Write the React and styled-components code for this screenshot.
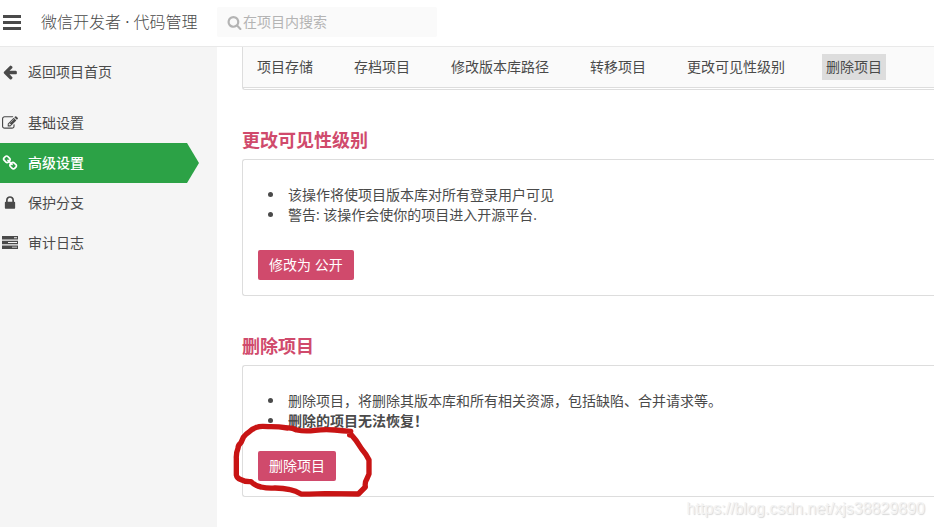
import React, { useState } from "react";
import styled, { createGlobalStyle } from "styled-components";

const GlobalStyle = createGlobalStyle`
  * {
    box-sizing: border-box;
  }
  body {
    margin: 0;
    background-color: #ffffff;
    color: #4a4a4a;
    font-family: "Open Sans", "Noto Sans CJK SC", sans-serif;
    font-size: 14px;
    line-height: 20px;
  }
`;

const Page = styled.div`
  position: relative;
  display: flex;
  flex-direction: column;
  min-height: 100vh;
  overflow: hidden;
`;
const Header = styled.header`
  display: flex;
  align-items: center;
  height: 47px;
  padding-bottom: 2px;
  border-bottom: 1px solid #e9e9e9;
`;
const Brand = styled.div`
  display: flex;
  align-items: center;
  flex: 0 0 217px;
`;
const MenuButton = styled.button`
  display: flex;
  margin-right: 20px;
  padding: 0 0 0 3px;
  border: none;
  background-color: transparent;
  color: #4a4a4a;
`;
const BrandName = styled.h1`
  margin: 0;
  font-size: 16px;
  font-weight: 300;
  white-space: nowrap;
`;
const SearchBox = styled.label`
  display: flex;
  align-items: center;
  gap: 1px;
  width: 220px;
  height: 30px;
  padding-left: 10px;
  border-radius: 2px;
  background-color: #fafafa;
  color: #b4b4b4;
`;
const SearchInput = styled.input`
  flex: 1;
  min-width: 0;
  padding: 0;
  border: none;
  outline: none;
  background-color: transparent;
  color: #4a4a4a;
  font: inherit;
  &::placeholder {
    color: #b4b4b4;
    opacity: 1;
  }
`;
const Body = styled.div`
  display: flex;
  flex: 1;
`;
const Sidebar = styled.nav`
  flex: 0 0 217px;
  padding-top: 5px;
  background-color: #f5f5f5;
`;
const SideList = styled.ul`
  margin: 11px 0 0;
  padding: 0;
  list-style: none;
`;
const SideLink = styled.a`
  display: flex;
  align-items: center;
  gap: 10px;
  width: 199px;
  height: 40px;
  padding-left: 2px;
  background-color: ${(props) => (props.$active ? "#2ca246" : "transparent")};
  clip-path: polygon(0 0, 187px 0, 100% 50%, 187px 100%, 0 100%);
  color: ${(props) => (props.$active ? "#ffffff" : "#4a4a4a")};
  font-weight: ${(props) => (props.$active ? 500 : 400)};
  text-decoration: none;
`;
const Main = styled.main`
  flex: 1;
  min-width: 0;
  padding-left: 25px;
`;
const TabsFrame = styled.div`
  padding-bottom: 1px;
  border: solid #dddddd;
  border-width: 0 0 1px 1px;
  border-radius: 0 0 0 3px;
`;
const Tabs = styled.nav`
  display: flex;
  gap: 33px;
  padding: 7px 0 7px 10px;
  border-bottom: 1px solid #dddddd;
  background-color: #fafafa;
`;
const Tab = styled.a`
  padding: 3px 4px;
  background-color: ${(props) => (props.$active ? "#dddddd" : "transparent")};
  color: #4a4a4a;
  text-decoration: none;
  white-space: nowrap;
`;
const Section = styled.section`
  margin-top: 40px;
`;
const SectionTitle = styled.h2`
  margin: 0 0 9px;
  color: #d04a6c;
  font-size: 18px;
  font-weight: 700;
  line-height: 20px;
`;
const Panel = styled.div`
  padding: 25px 15px 15px;
  border: solid #dddddd;
  border-width: 1px 0 1px 1px;
  border-radius: 3px 0 0 3px;
`;
const Notes = styled.ul`
  margin: 0 0 ${(props) => props.$space}px;
  padding-left: 27px;
`;
const Note = styled.li`
  padding-left: 3px;
`;
const ButtonWrap = styled.div`
  position: relative;
  display: flex;
`;
const DangerButton = styled.button`
  height: 30px;
  padding: 0 11px;
  border: none;
  border-radius: 2px;
  background-color: #d04a6c;
  color: #ffffff;
  font: inherit;
`;
const HandCircle = styled.svg`
  position: absolute;
  top: -29px;
  left: -33px;
  width: 150px;
  height: 75px;
  pointer-events: none;
`;
const Watermark = styled.div`
  position: absolute;
  right: 9px;
  bottom: 8px;
  color: #f3f3f3;
  font-family: "Liberation Sans", sans-serif;
  font-size: 16px;
  text-shadow: 1px 1px 1px #d8d8d8;
`;

const icons = {
  search:
    "M1216 832q0-185-131.5-316.5t-316.5-131.5-316.5 131.5-131.5 316.5 131.5 316.5 316.5 131.5 316.5-131.5 131.5-316.5zm512 832q0 52-38 90t-90 38q-54 0-90-38l-343-342q-179 124-399 124-143 0-273.5-55.5t-225-150-150-225-55.5-273.5 55.5-273.5 150-225 225-150 273.5-55.5 273.5 55.5 225 150 150 225 55.5 273.5q0 220-124 399l343 343q37 37 37 90z",
  back: "M1664 896v128q0 53-32.5 90.5t-84.5 37.5h-704l293 294q38 36 38 90t-38 90l-75 76q-37 37-90 37-52 0-91-37l-651-652q-37-37-37-90 0-52 37-91l651-650q38-38 91-38 52 0 90 38l75 74q38 38 38 91t-38 91l-293 293h704q52 0 84.5 37.5t32.5 90.5z",
  edit: "M888 1184l116-116-152-152-116 116v56h96v96h56zm440-720q-16-16-33 1l-350 350q-17 17-1 33t33-1l350-350q17-17 1-33zm80 594v190q0 119-84.5 203.5t-203.5 84.5h-832q-119 0-203.5-84.5t-84.5-203.5v-832q0-119 84.5-203.5t203.5-84.5h832q63 0 117 25 15 7 18 23 3 17-9 29l-49 49q-14 14-32 8-23-6-45-6h-832q-66 0-113 47t-47 113v832q0 66 47 113t113 47h832q66 0 113-47t47-113v-126q0-13 9-22l64-64q15-15 35-7t20 29zm-96-738l288 288-672 672h-288v-288zm444 132l-92 92-288-288 92-92q28-28 68-28t68 28l152 152q28 28 28 68t-28 68z",
  link: "M1520 1216q0-40-28-68l-208-208q-28-28-68-28-42 0-72 32 3 3 19 18.5t21.5 21.5 15 19 13 25.5 3.5 27.5q0 40-28 68t-68 28q-15 0-27.5-3.5t-25.5-13-19-15-21.5-21.5-18.5-19q-33 31-33 73 0 40 28 68l206 207q27 27 68 27 40 0 68-26l147-146q28-28 28-67zm-703-705q0-40-28-68l-206-207q-28-28-68-28-39 0-68 27l-147 146q-28 28-28 67 0 40 28 68l208 208q27 27 68 27 42 0 72-31-3-3-19-18.5t-21.5-21.5-15-19-13-25.5-3.5-27.5q0-40 28-68t68-28q15 0 27.5 3.5t25.5 13 19 15 21.5 21.5 18.5 19q33-31 33-73zm895 705q0 120-85 203l-147 146q-83 83-203 83-121 0-204-85l-206-207q-83-83-83-203 0-123 88-209l-88-88q-86 88-208 88-120 0-204-84l-208-208q-84-84-84-204t85-203l147-146q83-83 203-83 121 0 204 85l206 207q83 83 83 203 0 123-88 209l88 88q86-88 208-88 120 0 204 84l208 208q84 84 84 204z",
  lock: "M640 768h512v-192q0-106-75-181t-181-75-181 75-75 181v192zm832 96v576q0 40-28 68t-68 28h-960q-40 0-68-28t-28-68v-576q0-40 28-68t68-28h32v-192q0-184 132-316t316-132 316 132 132 316v192h32q40 0 68 28t28 68z",
  // three rack rows, each with its slot cut out
  log: "M0 112h1792v400h-1792zM1344 260v90h336v-90zM0 640h1792v400h-1792zM672 784v112h1008v-112zM0 1168h1792v400h-1792zM1120 1320v90h560v-90z",
};

function Icon({ name, size = 16 }) {
  return (
    <svg
      width={size}
      height={size}
      viewBox="0 0 1792 1792"
      fill="currentColor"
      fillRule={name === "log" ? "evenodd" : "nonzero"}
      aria-hidden="true"
    >
      <path d={icons[name]} />
    </svg>
  );
}

const sideItems = [
  { icon: "edit", label: "基础设置" },
  { icon: "link", label: "高级设置" },
  { icon: "lock", label: "保护分支" },
  { icon: "log", label: "审计日志" },
];

const tabs = [
  "项目存储",
  "存档项目",
  "修改版本库路径",
  "转移项目",
  "更改可见性级别",
  "删除项目",
];

function App() {
  const [activeSide, setActiveSide] = useState("高级设置");
  const [activeTab, setActiveTab] = useState("删除项目");
  const [keyword, setKeyword] = useState("");

  return (
    <Page>
      <GlobalStyle />
      <Header>
        <Brand>
          <MenuButton type="button" aria-label="菜单">
            <svg width="18" height="15" fill="currentColor" aria-hidden="true">
              <path d="M0 0h18v3H0zM0 6h18v3H0zM0 12h18v3H0z" />
            </svg>
          </MenuButton>
          <BrandName>
            微信开发者 <b>·</b> 代码管理
          </BrandName>
        </Brand>
        <SearchBox>
          <Icon name="search" size={15} />
          <SearchInput
            type="text"
            aria-label="在项目内搜索"
            placeholder="在项目内搜索"
            value={keyword}
            onChange={(ev) => setKeyword(ev.target.value)}
          />
        </SearchBox>
      </Header>
      <Body>
        <Sidebar>
          <SideLink href="#home">
            <Icon name="back" />
            返回项目首页
          </SideLink>
          <SideList>
            {sideItems.map((item) => (
              <li key={item.label}>
                <SideLink
                  href={`#${item.icon}`}
                  $active={item.label === activeSide}
                  onClick={() => setActiveSide(item.label)}
                >
                  <Icon name={item.icon} />
                  {item.label}
                </SideLink>
              </li>
            ))}
          </SideList>
        </Sidebar>
        <Main>
          <TabsFrame>
            <Tabs>
              {tabs.map((tab) => (
                <Tab
                  key={tab}
                  href={`#${tab}`}
                  $active={tab === activeTab}
                  onClick={() => setActiveTab(tab)}
                >
                  {tab}
                </Tab>
              ))}
            </Tabs>
          </TabsFrame>
          <Section>
            <SectionTitle>更改可见性级别</SectionTitle>
            <Panel>
              <Notes $space={25}>
                <Note>该操作将使项目版本库对所有登录用户可见</Note>
                <Note>警告: 该操作会使你的项目进入开源平台.</Note>
              </Notes>
              <ButtonWrap>
                <DangerButton type="button">修改为 公开</DangerButton>
              </ButtonWrap>
            </Panel>
          </Section>
          <Section>
            <SectionTitle>删除项目</SectionTitle>
            <Panel>
              <Notes $space={20}>
                <Note>
                  删除项目，将删除其版本库和所有相关资源，包括缺陷、合并请求等。
                </Note>
                <Note>
                  <strong>删除的项目无法恢复！</strong>
                </Note>
              </Notes>
              <ButtonWrap>
                <DangerButton type="button">删除项目</DangerButton>
                <HandCircle viewBox="0 291 450 225" aria-hidden="true">
                  <path
                    d="M374 330L377 319Q352 318 330 315Q300 312 270 316T215 315Q200 308 188 309Q155 304 130 305Q105 302 95 307Q80 312 72 321Q62 327 55 337L48 353Q39 360 39 370Q33 385 34 400L34 450Q36 460 46 463Q60 471 78 470Q92 484 108 486Q130 491 150 489Q175 489 195 494Q212 497 228 507Q265 508 300 506L400 507L421 486Q419 472 425 463L432 447L432 405Q424 388 410 372Q395 346 376 326"
                    fill="none"
                    stroke="#c81414"
                    strokeWidth="16"
                    strokeLinecap="round"
                    strokeLinejoin="round"
                  />
                </HandCircle>
              </ButtonWrap>
            </Panel>
          </Section>
        </Main>
      </Body>
      <Watermark>https://blog.csdn.net/xjs38829890</Watermark>
    </Page>
  );
}

export default App;
